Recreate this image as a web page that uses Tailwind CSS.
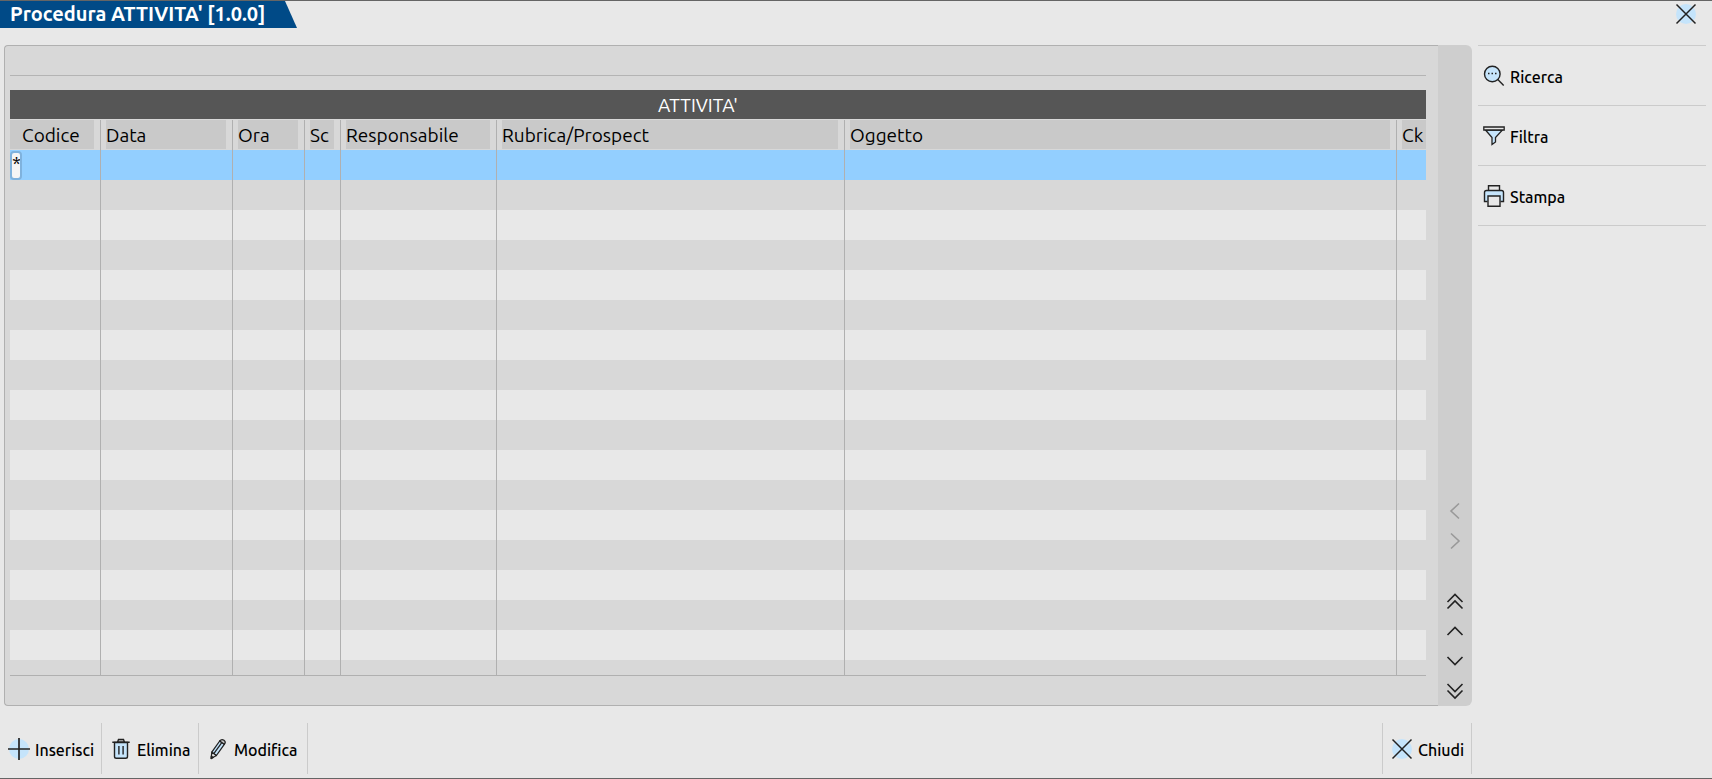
<!DOCTYPE html>
<html lang="it">
<head>
    <meta charset="UTF-8">
    <meta name="viewport" content="width=device-width, initial-scale=1.0">
    <title>Procedura ATTIVITA' [1.0.0]</title>
    <script src="https://cdn.jsdelivr.net/npm/@tailwindcss/browser@4"></script>
</head>
<body class="bg-[#e8e8e8] text-black font-['Ubuntu','Noto_Sans',sans-serif]">
    <div class="h-screen flex flex-col border-y border-[#656565] overflow-hidden">
        <!-- Title bar -->
        <header class="h-11 shrink-0 flex items-start justify-between">
            <h1 class="h-[27px] w-[297px] pl-[10px] bg-[#004a87] text-white text-[20px] leading-[26px] font-semibold whitespace-nowrap [clip-path:polygon(0_0,285px_0,100%_100%,0_100%)]">Procedura ATTIVITA' [1.0.0]</h1>
            <button aria-label="Chiudi finestra" class="mt-[2px] mr-[15px]">
                <svg class="size-[22px]" viewBox="0 0 22 22" fill="none"><circle cx="11" cy="11" r="10" fill="#c5e4fb"/><path d="M1.500 1.500L20.500 20.500M20.500 1.500L1.500 20.500" stroke="#222" stroke-width="1.500"/></svg>
            </button>
        </header>

        <div class="flex-1 min-h-0 flex">
            <div class="flex-1 min-w-0 flex flex-col">
                <main class="flex-1 min-h-0 ml-1 flex">
                    <section class="flex-1 min-w-0 flex flex-col pl-[5px] pr-3 pb-[29px] bg-[#d8d8d8] border border-r-0 border-[#b0b0b0] rounded-l">
                        <div class="h-[30px] shrink-0 border-b border-[#b4b4b4]"></div>
                        <div class="mt-[14px] flex-1 min-h-0 overflow-hidden border-b border-[#b0b0b0]">
                            <table class="w-full table-fixed border-separate border-spacing-0">
                                <caption class="h-[29px] mb-px pt-px pr-10 bg-[#565656] text-white text-[19px] leading-[28px]">ATTIVITA'</caption>
                                <colgroup>
                                    <col class="w-[91px]"><col class="w-[132px]"><col class="w-[72px]"><col class="w-9"><col class="w-[156px]"><col class="w-[348px]"><col><col class="w-[29px]">
                                </colgroup>
                                <thead>
                                    <tr class="h-[30px] text-left text-[19px] leading-[28px] whitespace-nowrap [&>th]:p-0 [&>th]:pb-px [&>th]:pr-[6px] [&>th]:pl-[5px] [&>th]:font-normal [&>th]:border-r [&>th]:border-[#b0b0b0] [&_span]:block [&_span]:h-[29px] [&_span]:pt-px [&_span]:bg-[#c9c9c9]">
                                        <th class="pl-0!"><span class="pl-3">Codice</span></th>
                                        <th><span>Data</span></th>
                                        <th><span>Ora</span></th>
                                        <th><span>Sc</span></th>
                                        <th><span>Responsabile</span></th>
                                        <th><span>Rubrica/Prospect</span></th>
                                        <th><span>Oggetto</span></th>
                                        <th class="pr-0! border-r-0!"><span>Ck</span></th>
                                    </tr>
                                </thead>
                                <tbody id="rows" class="[&>tr]:h-[30px] [&>tr:nth-child(odd)]:bg-[#e8e8e8] [&_td]:p-0 [&_td]:border-r [&_td]:border-[#b0b0b0] [&_td:last-child]:border-r-0">
                                    <tr class="bg-[#93cfff]!">
                                        <td><input type="text" value="*" aria-label="Stato riga" class="block w-3 h-[29px] pb-1 bg-[#f5f5f5] border-2 border-[#7fb2dd] rounded text-center text-[19px] leading-[20px] outline-none"></td>
                                        <td></td><td></td><td></td><td></td><td></td><td></td><td></td>
                                    </tr>
                                </tbody>
                            </table>
                        </div>
                    </section>

                    <!-- Scroll buttons -->
                    <nav class="w-[34px] shrink-0 flex flex-col justify-end bg-[#cecece] rounded-r-md [&>button]:h-[30px] [&>button]:w-full [&>button]:flex [&>button]:items-center [&>button]:justify-center [&_svg]:size-[18px] [&_svg]:fill-none [&_svg]:stroke-[#222] [&_svg]:[stroke-width:1.6]">
                        <button aria-label="Sinistra" disabled><svg viewBox="0 0 18 18"><path class="stroke-[#999]" d="M13 1.500L5 9L13 16.500"/></svg></button>
                        <button aria-label="Destra" disabled><svg viewBox="0 0 18 18"><path class="stroke-[#999]" d="M5 1.500L13 9L5 16.500"/></svg></button>
                        <button aria-label="Inizio" class="mt-[30px]"><svg viewBox="0 0 18 18"><path d="M1.500 10L9 2.500L16.500 10M1.500 16.500L9 9L16.500 16.500"/></svg></button>
                        <button aria-label="Su"><svg viewBox="0 0 18 18"><path d="M1.500 13L9 5.500L16.500 13"/></svg></button>
                        <button aria-label="Giu"><svg viewBox="0 0 18 18"><path d="M1.500 5L9 12.500L16.500 5"/></svg></button>
                        <button aria-label="Fine"><svg viewBox="0 0 18 18"><path d="M1.500 2L9 9.500L16.500 2M1.500 8.500L9 16L16.500 8.500"/></svg></button>
                    </nav>
                </main>

                <!-- Bottom toolbar -->
                <footer class="shrink-0 flex pt-[17px] pb-1 text-[16px] font-medium whitespace-nowrap [&>button]:h-[51px] [&>button]:pl-2 [&>button]:flex [&>button]:items-center [&>button]:gap-[5px] [&>button]:border-r [&>button]:border-[#cbcbcb] [&_svg]:size-[22px] [&_svg]:shrink-0 [&_span]:pt-[2px]">
                    <button class="w-[102px]">
                        <svg viewBox="0 0 22 22" fill="none"><circle cx="11" cy="11" r="10" fill="#c5e4fb"/><path d="M11 0V22M0 11H22" stroke="#222" stroke-width="1.700"/></svg>
                        <span>Inserisci</span>
                    </button>
                    <button class="w-[97px]">
                        <svg viewBox="0 0 22 22" fill="none" stroke="#222" stroke-width="1.400"><path d="M4.500 4.500H17.500V18.500Q17.500 20.300 15.700 20.300H6.300Q4.500 20.300 4.500 18.500Z" fill="#c5e4fb"/><path d="M7.500 4.300L8.500 1.500H13.500L14.500 4.300Z" fill="#c4c4c4"/><path d="M2.300 4.300H19.700M8.900 8V16.500M13.100 8V16.500"/></svg>
                        <span>Elimina</span>
                    </button>
                    <button class="w-[109px]">
                        <svg viewBox="0 0 22 22" fill="none" stroke="#222" stroke-width="1.300" stroke-linejoin="round"><path d="M4.800 14.200L12.700 3L17.300 6.300L9.400 17.500Z" fill="#c5e4fb"/><path d="M4.800 14.200L9.400 17.500L4.200 20.500Z" fill="#e8e8e8"/><path d="M12.700 3Q14.500 .6 17 2.200Q19.300 4 17.300 6.300Z" fill="#c4c4c4"/><path d="M7 15.300L14.600 4.800"/><path d="M4.300 18.200L6.200 19.400L4.200 20.500Z" fill="#222"/></svg>
                        <span>Modifica</span>
                    </button>
                    <button class="w-[90px] ml-auto border-l">
                        <svg viewBox="0 0 22 22" fill="none"><circle cx="11" cy="11" r="10" fill="#c5e4fb"/><path d="M1.500 1.500L20.500 20.500M20.500 1.500L1.500 20.500" stroke="#222" stroke-width="1.500"/></svg>
                        <span>Chiudi</span>
                    </button>
                </footer>
            </div>

            <!-- Side actions -->
            <aside class="w-[228px] shrink-0 mx-[6px] text-[16px] font-medium">
                <ul class="border-t border-[#cbcbcb] [&>li]:border-b [&>li]:border-[#cbcbcb] [&_button]:w-full [&_button]:h-[59px] [&_button]:pl-[5px] [&_button]:flex [&_button]:items-center [&_button]:gap-[5px] [&_svg]:size-[22px] [&_span]:pt-[2px]">
                    <li><button>
                        <svg viewBox="0 0 22 22" fill="none" stroke="#222" stroke-width="1.400"><circle cx="9.300" cy="9" r="7.800" fill="#c5e4fb"/><path d="M14.800 14.500L20.700 20.400"/><path d="M5 8.500H6.500M8.500 8.500H10M12 8.500H13.500"/></svg>
                        <span>Ricerca</span>
                    </button></li>
                    <li><button>
                        <svg viewBox="0 0 22 22" fill="none" stroke="#222" stroke-width="1.300"><path d="M2.500 5L9 12.500V19.500L12.500 17V12.500L19.500 5Z" fill="#c5e4fb"/><path d="M.8 2H21.200V5H.8Z" fill="#e8e8e8"/></svg>
                        <span>Filtra</span>
                    </button></li>
                    <li><button>
                        <svg viewBox="0 0 22 22" fill="none" stroke="#222" stroke-width="1.400"><path d="M5.500 5.500V.8H16.500V5.500" fill="#e8e8e8"/><path d="M4.500 16.500H1.500V7.500Q1.500 5.500 3.500 5.500H18.500Q20.500 5.500 20.500 7.500V16.500H17.500" fill="#c5e4fb"/><path d="M5 11H17V21.200H5Z" fill="#e8e8e8"/></svg>
                        <span>Stampa</span>
                    </button></li>
                </ul>
            </aside>
        </div>
    </div>

    <script>
        const rows = document.getElementById('rows');

        // Empty rows below the current one
        for (let i = 0; i < 17; i++) {
            const tr = document.createElement('tr');
            tr.innerHTML = '<td></td>'.repeat(8);
            rows.appendChild(tr);
        }
    </script>
</body>
</html>
